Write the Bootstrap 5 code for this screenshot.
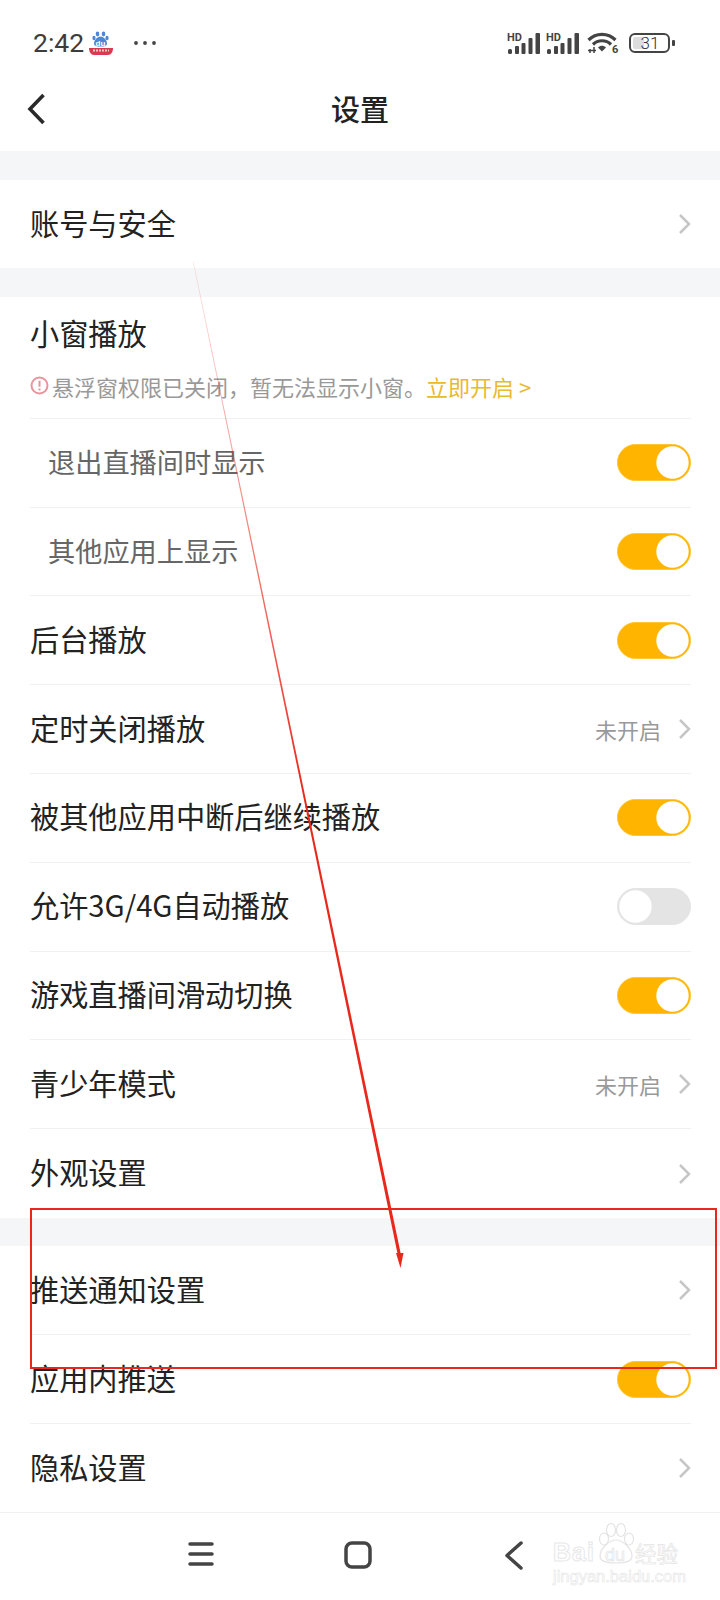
<!DOCTYPE html>
<html lang="zh-CN">

<head>
  <meta charset="UTF-8" />
  <title>设置</title>
  <link href="https://cdn.jsdelivr.net/npm/bootstrap@5.3.0/dist/css/bootstrap.min.css" rel="stylesheet" />
  <script src="https://cdn.jsdelivr.net/npm/bootstrap@5.3.0/dist/js/bootstrap.bundle.min.js"></script>
  <style>
    body {
      width: 720px;
      height: 1600px;
      overflow: hidden;
      position: relative;
      background: #f5f6f8;
      font-family: "Noto Sans CJK SC", "Liberation Sans", sans-serif;
      color: #222;
    }

    /* 状态栏 */
    .status-bar {
      height: 66px;
      padding: 20px 44px 0 33px;
    }

    .status-time {
      font-family: Roboto, sans-serif;
      font-size: 26.5px;
      font-weight: 400;
      color: #3c3c3c;
      line-height: 46px;
    }

    .status-dots {
      margin-left: 19px;
    }

    .status-icons {
      gap: 8px;
    }

    .status-icons svg {
      overflow: visible;
    }

    .status-sig2 {
      margin-left: -2px;
    }

    .status-batt {
      margin-left: 3px;
    }

    .tiny-hd {
      font-family: Roboto, sans-serif;
      font-size: 11px;
      font-weight: 700;
      fill: #444;
    }

    .tiny-six {
      font-family: Roboto, sans-serif;
      font-size: 11px;
      font-weight: 700;
      fill: #444;
    }

    .tiny-du {
      font-family: "Liberation Sans", sans-serif;
      font-size: 8px;
      font-weight: 700;
      fill: #fff;
    }

    .battery-num {
      font-family: Roboto, sans-serif;
      font-size: 17px;
      font-weight: 300;
      fill: #333;
    }

    /* 标题栏 */
    .title-bar {
      height: 85px;
      position: relative;
    }

    .title-bar svg {
      position: absolute;
      left: 27px;
      top: 27px;
    }

    .title-text {
      font-size: 29px;
      font-weight: 500;
      line-height: 1;
    }

    /* 设置分组 */
    .set-group {
      margin-top: 28.5px;
      padding: 0 29px 0 30px;
    }

    .set-row {
      height: 88.8px;
      font-size: 29.2px;
      border-bottom: 1px solid #f1f1f1;
    }

    .set-row>span {
      margin-bottom: 3px;
    }

    .set-row:last-child {
      border-bottom: 0;
    }

    .set-sub {
      padding-left: 18px;
      color: #666;
      font-size: 27.2px;
    }

    .float-head {
      height: 122px;
      border-bottom: 1px solid #f1f1f1;
      padding-top: 13px;
    }

    .float-title {
      font-size: 29.2px;
      line-height: 44px;
    }

    .float-tip {
      margin-top: 16px;
      font-size: 22px;
      line-height: 32px;
      color: #999;
      gap: 3px;
    }

    .float-open {
      color: #e9b92f;
    }

    .row-value {
      font-size: 22px;
      color: #999;
      margin-right: 17px;
    }

    .row-arrow {
      margin-right: -1px;
    }

    /* 开关 */
    .form-switch.set-switch {
      padding: 0;
      margin: 0;
      min-height: 0;
      line-height: 0;
    }

    .form-switch.set-switch .form-check-input {
      width: 74px;
      height: 37px;
      margin: 0;
      float: none;
      border: 1px solid #e4e4e4;
      background-color: #e4e4e4;
      background-image: url("data:image/svg+xml,%3csvg xmlns='http://www.w3.org/2000/svg' viewBox='-4 -4 8 8'%3e%3ccircle r='3.7' fill='%23fff'/%3e%3c/svg%3e");
      box-shadow: none;
    }

    .form-switch.set-switch .form-check-input:checked {
      background-color: #ffb400;
      border-color: #ffc636;
      background-position: right center;
    }

    /* 底部导航 */
    .nav-keys {
      position: absolute;
      left: 0;
      right: 0;
      bottom: 0;
      height: 88px;
      border-top: 1px solid #f1f1f1;
      background: #fff;
    }

    .nav-key {
      position: absolute;
      top: 28px;
    }

    /* 水印 */
    .wm-box {
      position: absolute;
      left: 553px;
      top: 1523px;
      width: 130px;
      height: 62px;
      pointer-events: none;
      color: transparent;
      -webkit-text-stroke: 1px #e8e8e8;
    }

    .wm-box svg {
      position: absolute;
      left: 44px;
      top: 0;
    }

    .wm-logo {
      position: absolute;
      left: 0;
      top: 14px;
      font-family: "Liberation Sans", sans-serif;
      font-size: 25px;
      font-weight: 700;
      letter-spacing: 1px;
      line-height: 30px;
    }

    .wm-du {
      position: absolute;
      left: 52px;
      top: 20px;
      font-family: "Liberation Sans", sans-serif;
      font-size: 18px;
      line-height: 24px;
      -webkit-text-stroke: 0.7px #e4e4e4;
    }

    .wm-jing {
      position: absolute;
      left: 82px;
      top: 17px;
      font-size: 21.5px;
      line-height: 26px;
      white-space: nowrap;
      -webkit-text-stroke: 0.7px #e4e4e4;
    }

    .wm-url {
      position: absolute;
      left: 0;
      top: 44px;
      font-family: "Liberation Sans", sans-serif;
      font-size: 16.5px;
      line-height: 18px;
      white-space: nowrap;
      -webkit-text-stroke: 0.6px #e6e6e6;
    }

    /* 红色标注 */
    .mark-layer {
      position: absolute;
      left: 0;
      top: 0;
      pointer-events: none;
    }
  </style>
</head>

<body>
  <header class="bg-white">
    <div class="status-bar d-flex align-items-center justify-content-between">
      <div class="d-flex align-items-center">
        <span class="status-time">2:42</span>
        <svg class="ms-1" width="26" height="26" viewBox="0 0 26 26">
          <g fill="#4f86d8">
            <ellipse cx="9.500" cy="4" rx="1.800" ry="2.400" />
            <ellipse cx="15.500" cy="4" rx="1.800" ry="2.400" />
            <ellipse cx="6" cy="8" rx="1.600" ry="2.200" />
            <ellipse cx="19" cy="8" rx="1.600" ry="2.200" />
            <path d="M12.500 6.500c3.500 0 6.500 4 6.500 7 0 2.500-2.500 3-6.500 3s-6.500-.5-6.500-3c0-3 3-7 6.500-7z" />
          </g>
          <text class="tiny-du" x="12.500" y="15.500" text-anchor="middle">du</text>
          <path d="M1 18h24c0 4-2 7-5 7H6c-3 0-5-3-5-7z" fill="#d93a50" />
          <path d="M5 20.500h16" stroke="#f6c6c6" stroke-width="2" stroke-dasharray="2 1" />
        </svg>
        <svg class="status-dots" width="24" height="6" viewBox="0 0 24 6" fill="#444">
          <circle cx="3" cy="3" r="1.900" />
          <circle cx="12" cy="3" r="1.900" />
          <circle cx="21" cy="3" r="1.900" />
        </svg>
      </div>
      <div class="status-icons d-flex align-items-center">
        <svg width="33" height="21" viewBox="0 0 33 21">
          <text class="tiny-hd" x="0" y="8">HD</text>
          <g fill="#444">
            <rect x="1" y="16" width="4" height="5" rx="1.500" />
            <rect x="8" y="13" width="4" height="8" rx="1" />
            <rect x="14.500" y="10" width="4" height="11" rx="1" />
            <rect x="21.500" y="5" width="4" height="16" rx="1" />
            <rect x="28.500" y="0" width="4.500" height="21" rx="1" />
          </g>
        </svg>
        <svg class="status-sig2" width="33" height="21" viewBox="0 0 33 21">
          <text class="tiny-hd" x="0" y="8">HD</text>
          <g fill="#444">
            <rect x="1" y="16" width="4" height="5" rx="1.500" />
            <rect x="8" y="13" width="4" height="8" rx="1" />
            <rect x="14.500" y="10" width="4" height="11" rx="1" />
            <rect x="21.500" y="5" width="4" height="16" rx="1" />
            <rect x="28.500" y="0" width="4.500" height="21" rx="1" />
          </g>
        </svg>
        <svg width="31" height="22" viewBox="0 0 31 22">
          <g fill="none" stroke="#444" stroke-width="3.200">
            <path d="M1.500 8C9 0.500 21 0.500 28.500 8" />
            <path d="M6 12.500c5-5 13-5 18 0" />
          </g>
          <path d="M11 15.500c2.500-2.200 5.500-2.200 8 0l-4 4z" fill="#444" />
          <path d="M3 21v-4M7 21v-6M1 18.500h8" stroke="#444" stroke-width="1.500" />
          <text class="tiny-six" x="25" y="21">6</text>
        </svg>
        <svg class="status-batt" width="47" height="20" viewBox="0 0 47 20">
          <rect x="1" y="1" width="39" height="18" rx="5" fill="#fff" stroke="#444" stroke-width="2" />
          <rect x="4" y="4" width="11" height="12" rx="2" fill="#ddd" />
          <text class="battery-num" x="21" y="16" text-anchor="middle">31</text>
          <rect x="43" y="7" width="3" height="6" rx="1" fill="#444" />
        </svg>
      </div>
    </div>
    <div class="title-bar d-flex align-items-center justify-content-center">
      <svg width="19" height="32" viewBox="0 0 19 32" fill="none" stroke="#2a2a2a" stroke-width="3.600"
        stroke-linejoin="miter">
        <path d="M16.500 2L3 16l13.500 14" />
      </svg>
      <span class="title-text">设置</span>
    </div>
  </header>

  <main>
    <section class="set-group bg-white">
      <div class="set-row d-flex align-items-center justify-content-between">
        <span>账号与安全</span>
        <svg class="row-arrow" width="14" height="22" viewBox="0 0 14 22" fill="none" stroke="#c6c6c6" stroke-width="2.500">
          <path d="M2 2l9 9-9 9" />
        </svg>
      </div>
    </section>

    <section class="set-group bg-white">
      <div class="float-head">
        <div class="float-title">小窗播放</div>
        <div class="float-tip d-flex align-items-center">
          <svg width="19" height="19" viewBox="0 0 19 19" fill="none" stroke="#e8949c" stroke-width="2">
            <circle cx="9.500" cy="9.500" r="8" />
            <path d="M9.500 4.800v6M9.500 12.600v2" />
          </svg>
          <span>悬浮窗权限已关闭，暂无法显示小窗。<span class="float-open">立即开启 &gt;</span></span>
        </div>
      </div>
      <div class="set-row set-sub d-flex align-items-center justify-content-between">
        <span>退出直播间时显示</span>
        <div class="form-check form-switch set-switch"><input class="form-check-input" type="checkbox" checked /></div>
      </div>
      <div class="set-row set-sub d-flex align-items-center justify-content-between">
        <span>其他应用上显示</span>
        <div class="form-check form-switch set-switch"><input class="form-check-input" type="checkbox" checked /></div>
      </div>
      <div class="set-row d-flex align-items-center justify-content-between">
        <span>后台播放</span>
        <div class="form-check form-switch set-switch"><input class="form-check-input" type="checkbox" checked /></div>
      </div>
      <div class="set-row d-flex align-items-center justify-content-between">
        <span>定时关闭播放</span>
        <div class="d-flex align-items-center">
          <span class="row-value">未开启</span>
          <svg class="row-arrow" width="14" height="22" viewBox="0 0 14 22" fill="none" stroke="#c6c6c6" stroke-width="2.500">
            <path d="M2 2l9 9-9 9" />
          </svg>
        </div>
      </div>
      <div class="set-row d-flex align-items-center justify-content-between">
        <span>被其他应用中断后继续播放</span>
        <div class="form-check form-switch set-switch"><input class="form-check-input" type="checkbox" checked /></div>
      </div>
      <div class="set-row d-flex align-items-center justify-content-between">
        <span>允许3G/4G自动播放</span>
        <div class="form-check form-switch set-switch"><input class="form-check-input" type="checkbox" /></div>
      </div>
      <div class="set-row d-flex align-items-center justify-content-between">
        <span>游戏直播间滑动切换</span>
        <div class="form-check form-switch set-switch"><input class="form-check-input" type="checkbox" checked /></div>
      </div>
      <div class="set-row d-flex align-items-center justify-content-between">
        <span>青少年模式</span>
        <div class="d-flex align-items-center">
          <span class="row-value">未开启</span>
          <svg class="row-arrow" width="14" height="22" viewBox="0 0 14 22" fill="none" stroke="#c6c6c6" stroke-width="2.500">
            <path d="M2 2l9 9-9 9" />
          </svg>
        </div>
      </div>
      <div class="set-row d-flex align-items-center justify-content-between">
        <span>外观设置</span>
        <svg class="row-arrow" width="14" height="22" viewBox="0 0 14 22" fill="none" stroke="#c6c6c6" stroke-width="2.500">
          <path d="M2 2l9 9-9 9" />
        </svg>
      </div>
    </section>

    <section class="set-group bg-white">
      <div class="set-row d-flex align-items-center justify-content-between">
        <span>推送通知设置</span>
        <svg class="row-arrow" width="14" height="22" viewBox="0 0 14 22" fill="none" stroke="#c6c6c6" stroke-width="2.500">
          <path d="M2 2l9 9-9 9" />
        </svg>
      </div>
      <div class="set-row d-flex align-items-center justify-content-between">
        <span>应用内推送</span>
        <div class="form-check form-switch set-switch"><input class="form-check-input" type="checkbox" checked /></div>
      </div>
      <div class="set-row d-flex align-items-center justify-content-between">
        <span>隐私设置</span>
        <svg class="row-arrow" width="14" height="22" viewBox="0 0 14 22" fill="none" stroke="#c6c6c6" stroke-width="2.500">
          <path d="M2 2l9 9-9 9" />
        </svg>
      </div>
    </section>
  </main>

  <nav class="nav-keys">
    <svg class="nav-key" style="left:188px" width="26" height="26" viewBox="0 0 26 26" stroke="#444" stroke-width="3.500"
      stroke-linecap="round">
      <path d="M2 3h22M2 13h22M2 23h22" />
    </svg>
    <svg class="nav-key" style="left:344px" width="28" height="28" viewBox="0 0 28 28" fill="none" stroke="#444"
      stroke-width="3.500">
      <rect x="2" y="2" width="24" height="24" rx="6" />
    </svg>
    <svg class="nav-key" style="left:504px" width="20" height="29" viewBox="0 0 20 29" fill="none" stroke="#444"
      stroke-width="3.500" stroke-linecap="round" stroke-linejoin="round">
      <path d="M17 2L3 14.500 17 27" />
    </svg>
  </nav>

  <div class="wm-box">
    <svg width="38" height="42" viewBox="0 0 38 42" fill="#fff" stroke="#e4e4e4" stroke-width="1.200">
      <ellipse cx="7" cy="16" rx="4.500" ry="6" />
      <ellipse cx="14" cy="7" rx="4.500" ry="6.500" />
      <ellipse cx="24" cy="7" rx="4.500" ry="6.500" />
      <ellipse cx="32" cy="16" rx="4.500" ry="6" />
      <path d="M19 17c6 0 16 8 16 16 0 6-7 7-16 7s-16-1-16-7c0-8 10-16 16-16z" />
    </svg>
    <span class="wm-logo">Bai</span>
    <span class="wm-du">du</span>
    <span class="wm-jing">经验</span>
    <span class="wm-url">jingyan.baidu.com</span>
  </div>

  <svg class="mark-layer" width="720" height="1600" viewBox="0 0 720 1600">
    <defs>
      <linearGradient id="lineFade" x1="0" y1="262" x2="0" y2="800" gradientUnits="userSpaceOnUse">
        <stop offset="0" stop-color="#e8281c" stop-opacity="0.150" />
        <stop offset="1" stop-color="#e8281c" />
      </linearGradient>
    </defs>
    <polygon points="193,262 193.600,262 401,1255 397.800,1255" fill="url(#lineFade)" />
    <polygon points="400.500,1268 396,1253 403.500,1253" fill="#e8281c" />
    <rect x="31" y="1209" width="685" height="159" fill="none" stroke="#e8281c" stroke-width="2" />
  </svg>
</body>

</html>
